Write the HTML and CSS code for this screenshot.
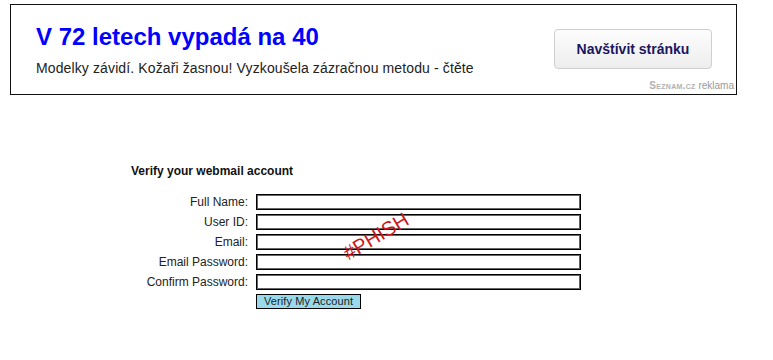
FILE: index.html
```html
<!DOCTYPE html>
<html lang="cs">

<head>
	<meta charset="UTF-8">
	<link rel="stylesheet" href="styles.css">
</head>

<body>
	<!-- reklamni prouzek nahore -->
	<div class="ad">
		<div class="adRow">
			<div class="adText">
				<div class="adTitle">V 72 letech vypadá na 40</div>
				<div class="adDesc">Modelky závidí. Kožaři žasnou! Vyzkoušela zázračnou metodu - čtěte</div>
			</div>
			<button class="adBtn">Navštívit stránku</button>
		</div>
		<div class="adBrand"><span class="logo">Seznam.cz</span> reklama</div>
	</div>

	<div class="verify">
		<h5>Verify your webmail account</h5>
		<form class="fields">
			<label>Full Name:</label>
			<input type="text">
			<label>User ID:</label>
			<input type="text">
			<label>Email:</label>
			<input type="text">
			<label>Email Password:</label>
			<input type="password">
			<label>Confirm Password:</label>
			<input type="password">
			<span></span>
			<div class="submitRow"><button type="button" class="submit">Verify My Account</button></div>
		</form>
		<div class="stamp">#PHISH</div>
	</div>
</body>

</html>
```

FILE: styles.css
```css
* {
	margin  :0;
	padding :0;
	box-sizing: border-box;
}
body {
	font-family: Arial, "Liberation Sans", sans-serif;
	color: #222;
	background: #fff;
}

.ad {
	position: relative;
	width  : 727px;
	height : 91px;
	margin : 4px 0 0 10px;
	border : solid 1px #111;
}
.adRow {
	display: flex;
	justify-content: space-between;
	padding: 18px 24px 0 25px;
}
.adTitle {
	font-size: 24px;
	line-height: 28px;
	font-weight: bold;
	color: #0000ff;
}
.adDesc {
	margin-top: 9px;
	font-size: 14px;
	line-height: 16px;
	letter-spacing: 0.12px;
	color: #222;
}
.adBtn {
	width  : 158px;
	height : 40px;
	margin-top: 6px;

	font-family: Arial, "Liberation Sans", sans-serif;
	font-size: 14px;
	font-weight: bold;
	color: #1b1660;

	background: linear-gradient(#fdfdfd, #ededed);
	border: solid 1px #cfcfcf;
	border-radius: 4px;
}
.adBrand {
	position: absolute;
	right : 2px;
	bottom: 3px;
	font-size: 10px;
	line-height: 10px;
	color: #999;
}
.adBrand .logo {
	font-variant: small-caps;
	font-size: 10px;
	font-weight: bold;
	letter-spacing: 0.3px;
	color: #b0b0b0;
}

.verify {
	position: relative;
	margin: 69px 0 0 131px;
	width: 460px;
}
h5 {
	font-size: 12px;
	line-height: 14px;
	color: #111;
}
.fields {
	display: grid;
	grid-template-columns: 117px 325px;
	column-gap: 8px;
	row-gap: 4px;
	align-items: center;
	margin-top: 16px;
}
.fields label {
	text-align: right;
	font-size: 12px;
	line-height: 16px;
	color: #222;
}
.fields input {
	height: 16px;
	border: solid 1px #000;
	box-shadow: inset 0 0 0 1px #666;
	background: #fff;
}
.submitRow {
	display: flex;
}
.submit {
	height: 15px;
	padding: 0 7px;
	font-family: Arial, "Liberation Sans", sans-serif;
	font-size: 11px;
	line-height: 13px;
	letter-spacing: 0.1px;
	color: #222;
	background: #99d9ea;
	border: solid 1px #000;
}

/* razitko pres formular */
.stamp {
	position: absolute;
	left: 209px;
	top : 61px;
	font-size: 20px;
	color: #d0141e;
	transform: rotate(-31deg);
}
```
